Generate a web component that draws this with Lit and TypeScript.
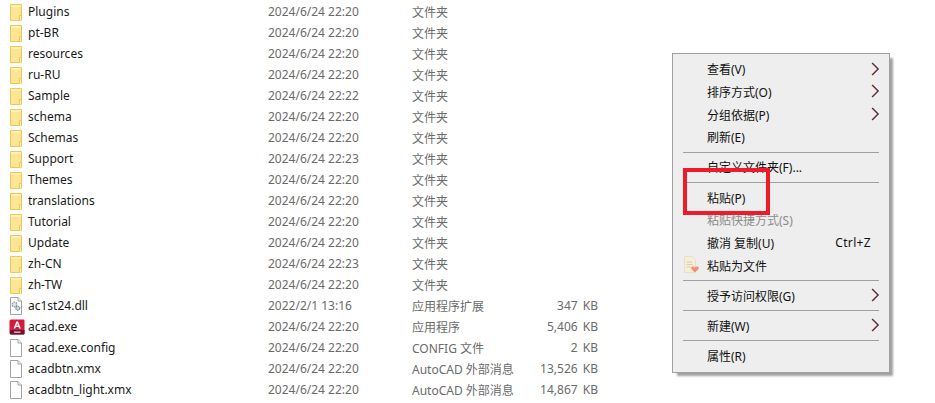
import { LitElement, html, css, svg } from "lit";
import { customElement } from "lit/decorators.js";

type Row = [string, string, string, string, string];
const rows: Row[] = [
  ["d", "Plugins", "2024/6/24 22:20", "文件夹", ""],
  ["d", "pt-BR", "2024/6/24 22:20", "文件夹", ""],
  ["d", "resources", "2024/6/24 22:20", "文件夹", ""],
  ["d", "ru-RU", "2024/6/24 22:20", "文件夹", ""],
  ["d", "Sample", "2024/6/24 22:22", "文件夹", ""],
  ["d", "schema", "2024/6/24 22:20", "文件夹", ""],
  ["d", "Schemas", "2024/6/24 22:20", "文件夹", ""],
  ["d", "Support", "2024/6/24 22:23", "文件夹", ""],
  ["d", "Themes", "2024/6/24 22:20", "文件夹", ""],
  ["d", "translations", "2024/6/24 22:20", "文件夹", ""],
  ["d", "Tutorial", "2024/6/24 22:20", "文件夹", ""],
  ["d", "Update", "2024/6/24 22:20", "文件夹", ""],
  ["d", "zh-CN", "2024/6/24 22:23", "文件夹", ""],
  ["d", "zh-TW", "2024/6/24 22:20", "文件夹", ""],
  ["l", "ac1st24.dll", "2022/2/1 13:16", "应用程序扩展", "347 KB"],
  ["a", "acad.exe", "2024/6/24 22:20", "应用程序", "5,406 KB"],
  ["f", "acad.exe.config", "2024/6/24 22:20", "CONFIG 文件", "2 KB"],
  ["f", "acadbtn.xmx", "2024/6/24 22:20", "AutoCAD 外部消息", "13,526 KB"],
  ["f", "acadbtn_light.xmx", "2024/6/24 22:20", "AutoCAD 外部消息", "14,867 KB"],
];

type Item = { t: string; arrow?: boolean; off?: boolean; key?: string; icon?: boolean } | null;
const items: Item[] = [
  { t: "查看(V)", arrow: true },
  { t: "排序方式(O)", arrow: true },
  { t: "分组依据(P)", arrow: true },
  { t: "刷新(E)" },
  null,
  { t: "自定义文件夹(F)..." },
  null,
  { t: "粘贴(P)" },
  { t: "粘贴快捷方式(S)", off: true },
  { t: "撤消 复制(U)", key: "Ctrl+Z" },
  { t: "粘贴为文件", icon: true },
  null,
  { t: "授予访问权限(G)", arrow: true },
  null,
  { t: "新建(W)", arrow: true },
  null,
  { t: "属性(R)" },
];

const folder = svg`<svg class="ico" viewBox="0 0 14 18" width="14" height="18">
  <path d="M1.5 1.5H12.5V17.5H1.5Z" fill="#fde596" stroke="#f0c850"/>
  <path d="M2 2H12V4H2Z" fill="#ffefb8"/>
  <path d="M10.5 17.5V12.5H12.5V17.5" fill="#fbf2cf" stroke="#f0c850"/>
</svg>`;
const page = svg`<svg class="ico" viewBox="0 0 14 18" width="14" height="18">
  <path d="M1.5 .5H9L12.5 4V17.5H1.5Z" fill="#fff" stroke="#a3a3a3"/>
  <path d="M9 .5V4H12.5" fill="#f2f2f2" stroke="#a3a3a3"/>
</svg>`;
const dll = svg`<svg class="ico" viewBox="0 0 14 18" width="14" height="18">
  <path d="M1.5 .5H9L12.5 4V17.5H1.5Z" fill="#fff" stroke="#a3a3a3"/>
  <path d="M9 .5V4H12.5" fill="#f2f2f2" stroke="#a3a3a3"/>
  <circle cx="5.5" cy="7.5" r="2.4" fill="#dfe4e8" stroke="#8a949c" stroke-width="1.2" stroke-dasharray="1.5 .8"/>
  <circle cx="8.8" cy="11.2" r="2" fill="#c6d4e0" stroke="#6f8aa0" stroke-width="1.1" stroke-dasharray="1.4 .7"/>
</svg>`;
const acad = svg`<svg class="ico" viewBox="0 0 16 16" width="16" height="16">
  <path d="M2 .5H14.5A1 1 0 0 1 15.5 1.5V14.5A1 1 0 0 1 14.5 15.5H2A1.5 1.5 0 0 1 .5 14V2A1.5 1.5 0 0 1 2 .5Z" fill="#d8193f"/>
  <path d="M1 11H15.5V14.5A1 1 0 0 1 14.5 15.5H2A1 1 0 0 1 1 14.5Z" fill="#6a1530"/>
  <path d="M4.6 9.5 7.4 2.5H9L11.8 9.5H10.2L9.6 7.9H6.8L6.2 9.5ZM7.3 6.6H9.1L8.2 4.2Z" fill="#fff"/>
  <rect x="5" y="12.5" width="6.5" height="1.3" fill="#e7c4cd"/>
</svg>`;
const chevron = svg`<svg class="chev" viewBox="0 0 9 14" width="9" height="14">
  <path d="M1.7 1 7.7 7 1.7 13" fill="none" stroke="#2f86d6" stroke-width="1"/>
  <path d="M1 1 7 7 1 13" fill="none" stroke="#7a221e" stroke-width="1.1"/>
</svg>`;
const pasteFile = svg`<svg viewBox="0 0 16 18" width="16" height="18">
  <path d="M1.5 .5H9.5L12.5 3.5V16.5H1.5Z" fill="#f4eedb" stroke="#e8e0c6"/>
  <path d="M3.5 6H9.5M3.5 8.5H9.5M3.5 11H7.5" stroke="#d8d0b4" fill="none"/>
  <path d="M12 16.5 8.6 13.2C7.7 12 8.4 10.6 9.7 10.6 10.6 10.6 11.5 11.1 12 11.8 12.5 11.1 13.4 10.6 14.3 10.6 15.6 10.6 16.3 12 15.4 13.2Z" fill="#f58f6f"/>
</svg>`;

@customElement("app-root")
export class AppRoot extends LitElement {
  static styles = css`
    :host {
      display: block;
      position: relative;
      width: 935px;
      height: 403px;
      overflow: hidden;
      background: #fff;
      font-family: "Noto Sans", "Noto Sans CJK SC", sans-serif;
      font-size: 12px;
    }
    .list {
      display: flex;
      flex-direction: column;
      padding: 1px 0 0 9px;
    }
    .row {
      display: grid;
      grid-template-columns: 19px 240px 144px 100px 86px;
      height: 21px;
      align-items: center;
      color: #6b6b6b;
      white-space: nowrap;
    }
    .icon {
      display: flex;
      align-items: center;
      height: 21px;
    }
    .ico {
      display: block;
    }
    .name {
      color: #1a1a1a;
    }
    .size {
      text-align: right;
      word-spacing: 2px;
    }
    .menu {
      position: absolute;
      left: 672px;
      top: 53px;
      width: 218px;
      box-sizing: border-box;
      height: 320px;
      padding: 4px 0;
      background: #eeeeee;
      border: 1px solid #a0a0a0;
      box-shadow: 4px 4px 2px -1px #a2a2a2;
      color: #111;
    }
    .item {
      display: flex;
      align-items: center;
      position: relative;
      height: 22.67px;
      padding-left: 34px;
      padding-right: 18px;
      white-space: nowrap;
    }
    .off {
      color: #8c8c8c;
    }
    .key {
      margin-left: auto;
      letter-spacing: 0.35px;
    }
    .chev {
      position: absolute;
      right: 9px;
      top: 3.5px;
    }
    .picon {
      position: absolute;
      left: 10px;
      top: 2px;
      line-height: 0;
    }
    .sep {
      height: 1px;
      margin: 3.25px 10px;
      background: #a0a0a0;
    }
    .mark {
      position: absolute;
      left: 683px;
      top: 168px;
      width: 87px;
      height: 47px;
      box-sizing: border-box;
      border: 4px solid #ee1c2b;
    }
  `;

  render() {
    return html`
      <div class="list">
        ${rows.map(
          ([k, n, d, t, s]) => html`<div class="row">
            <div class="icon">${k === "d" ? folder : k === "f" ? page : k === "l" ? dll : acad}</div>
            <div class="name">${n}</div>
            <div>${d}</div>
            <div>${t}</div>
            <div class="size">${s}</div>
          </div>`
        )}
      </div>
      <div class="menu">
        ${items.map((i) =>
          i === null
            ? html`<div class="sep"></div>`
            : html`<div class="item ${i.off ? "off" : ""}">
                ${i.icon ? html`<span class="picon">${pasteFile}</span>` : ""}
                <span>${i.t}</span>
                ${i.key ? html`<span class="key">${i.key}</span>` : ""}
                ${i.arrow ? chevron : ""}
              </div>`
        )}
      </div>
      <div class="mark"></div>
    `;
  }
}
